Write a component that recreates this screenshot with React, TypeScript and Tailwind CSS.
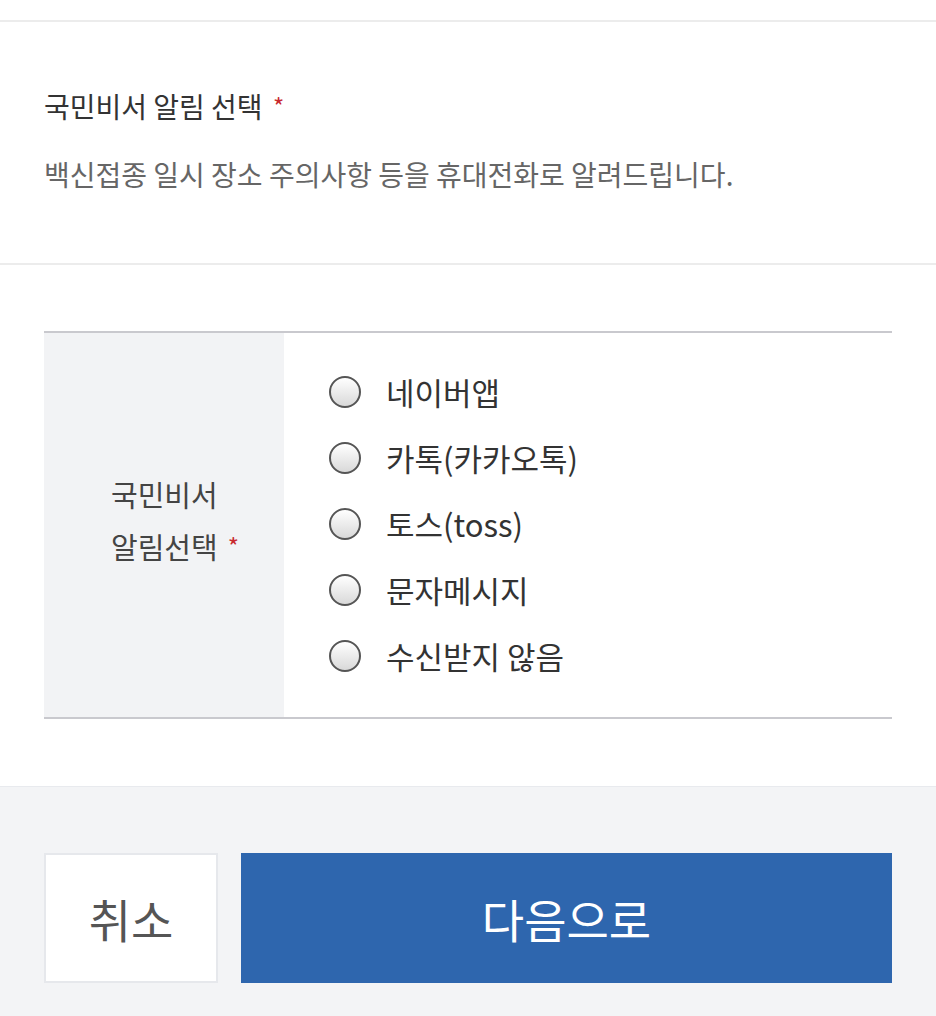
import React from 'react';

const font = { fontFamily: '"Noto Sans CJK KR", "Noto Sans", sans-serif' };

const options = ['네이버앱', '카톡(카카오톡)', '토스(toss)', '문자메시지', '수신받지 않음'];

function Radio() {
    return (
        <span className="w-[32px] h-[32px] rounded-full border-2 border-[#555] bg-gradient-to-b from-white to-[#d9d9d9] shrink-0" />
    );
}

export default function App() {
    return (
        <div className="w-[936px] h-[1016px] bg-white flex flex-col text-[#333]" style={font}>
            <div className="h-[22px] border-b-2 border-[#ececec]" />

            <section className="px-[44px] pt-[64px] pb-[69px] border-b-2 border-[#ececec]">
                <h2 className="text-[28px] leading-[40px] text-[#333]">
                    국민비서 알림 선택 <span className="text-[#c8282d] text-[24px] align-top ml-1">*</span>
                </h2>
                <p className="mt-[28px] text-[28px] leading-[40px] text-[#666]">
                    백신접종 일시 장소 주의사항 등을 휴대전화로 알려드립니다.
                </p>
            </section>

            <section className="px-[44px] pt-[66px] pb-[67px] border-b border-[#e8eaee]">
                <div className="flex border-t-2 border-b-2 border-[#c9c9ce]">
                    <div className="w-[240px] bg-[#f2f3f5] flex items-center pl-[67px]">
                        <div className="text-[29px] leading-[52px] text-[#444] -mt-[10px]">
                            국민비서<br />
                            알림선택<span className="text-[#c8282d] text-[24px] align-top ml-[10px]">*</span>
                        </div>
                    </div>
                    <div className="flex-1 flex flex-col pl-[45px] pt-[26px] pb-[28px]">
                        {options.map((o) => (
                            <label key={o} className="h-[66px] flex items-center gap-[25px] text-[31px] text-[#333]">
                                <Radio />
                                <span>{o}</span>
                            </label>
                        ))}
                    </div>
                </div>
            </section>

            <section className="flex-1 bg-[#f3f4f6] px-[44px] pt-[66px]">
                <div className="flex gap-[23px] h-[130px]">
                    <button className="w-[174px] bg-white border-2 border-[#e6e8ec] text-[46px] text-[#555]">취소</button>
                    <button className="flex-1 bg-[#2e66ae] text-white text-[46px]">다음으로</button>
                </div>
            </section>
        </div>
    );
}
